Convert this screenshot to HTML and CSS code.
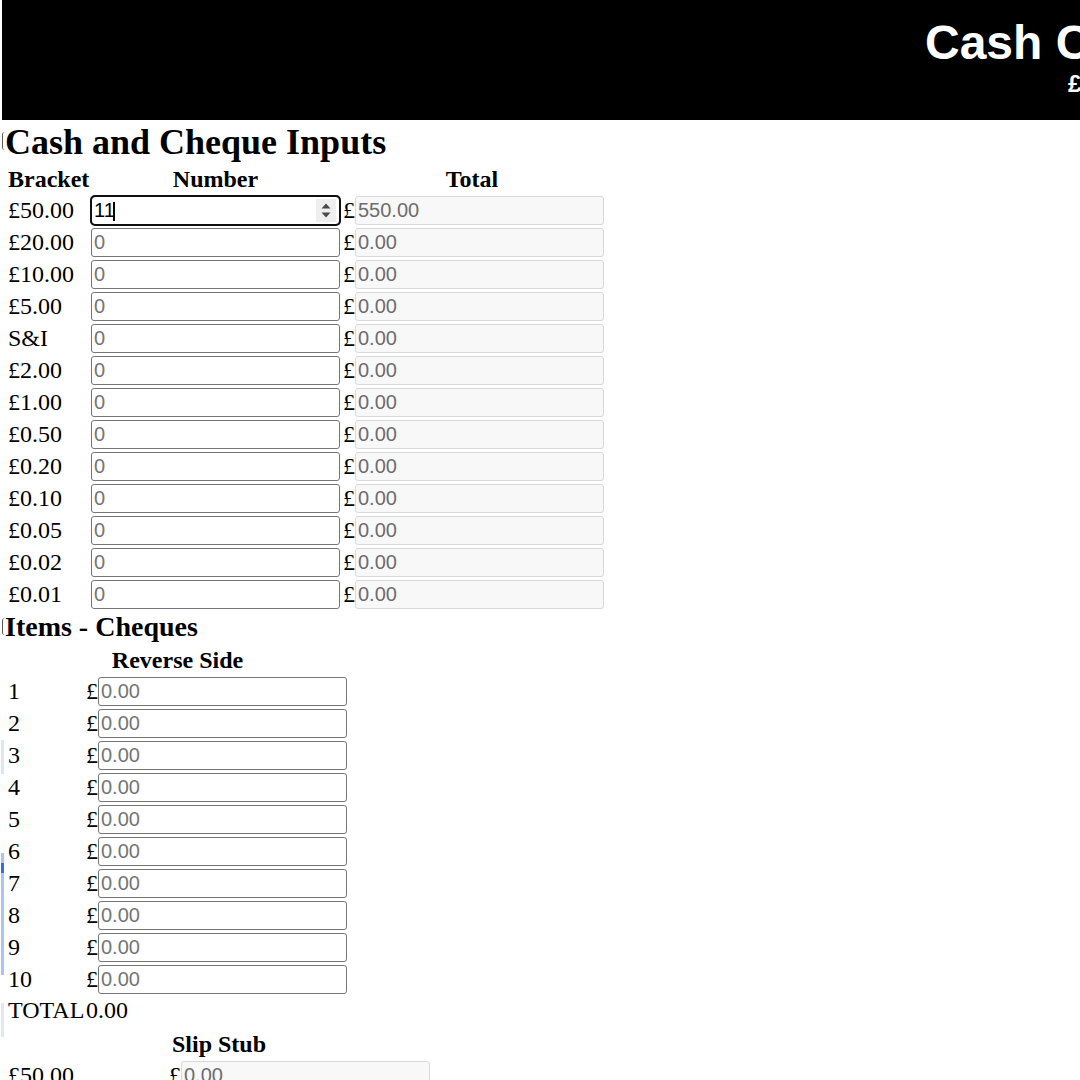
FILE: index.html
```html
<!DOCTYPE html>
<html lang="en">
<head>
<meta charset="utf-8">
<title>Cash Count</title>
<link rel="stylesheet" href="styles.css">
</head>
<body>
<header class="banner">
  <div class="banner-inner">
    <h1 class="banner-title">Cash Count</h1>
    <p class="banner-total">£550.00</p>
  </div>
</header>

<main class="page">
  <section class="block">
    <h1 class="section-title title-lg">Cash and Cheque Inputs</h1>
    <div class="grid cash-grid">
      <div class="head">Bracket</div>
      <div class="head centered">Number</div>
      <div class="head centered">Total</div>

      <div class="label">£50.00</div>
      <div class="cell">
        <span class="caret-wrap">
          <input class="field field-active" type="number" value="11">
          <span class="spin" aria-hidden="true">
            <svg width="12" height="17" viewBox="0 0 12 17"><path d="M6 1.5 L10.5 6.5 H1.5 Z" fill="#4a4a4a"/><path d="M6 15.5 L10.5 10.5 H1.5 Z" fill="#4a4a4a"/></svg>
          </span>
        </span>
      </div>
      <div class="money money-gap">£<input class="field readout" type="text" value="550.00" readonly></div>

      <div class="label">£20.00</div>
      <div class="cell"><input class="field" type="number" placeholder="0"></div>
      <div class="money money-gap">£<input class="field readout" type="text" value="0.00" readonly></div>

      <div class="label">£10.00</div>
      <div class="cell"><input class="field" type="number" placeholder="0"></div>
      <div class="money money-gap">£<input class="field readout" type="text" value="0.00" readonly></div>

      <div class="label">£5.00</div>
      <div class="cell"><input class="field" type="number" placeholder="0"></div>
      <div class="money money-gap">£<input class="field readout" type="text" value="0.00" readonly></div>

      <div class="label">S&amp;I</div>
      <div class="cell"><input class="field" type="number" placeholder="0"></div>
      <div class="money money-gap">£<input class="field readout" type="text" value="0.00" readonly></div>

      <div class="label">£2.00</div>
      <div class="cell"><input class="field" type="number" placeholder="0"></div>
      <div class="money money-gap">£<input class="field readout" type="text" value="0.00" readonly></div>

      <div class="label">£1.00</div>
      <div class="cell"><input class="field" type="number" placeholder="0"></div>
      <div class="money money-gap">£<input class="field readout" type="text" value="0.00" readonly></div>

      <div class="label">£0.50</div>
      <div class="cell"><input class="field" type="number" placeholder="0"></div>
      <div class="money money-gap">£<input class="field readout" type="text" value="0.00" readonly></div>

      <div class="label">£0.20</div>
      <div class="cell"><input class="field" type="number" placeholder="0"></div>
      <div class="money money-gap">£<input class="field readout" type="text" value="0.00" readonly></div>

      <div class="label">£0.10</div>
      <div class="cell"><input class="field" type="number" placeholder="0"></div>
      <div class="money money-gap">£<input class="field readout" type="text" value="0.00" readonly></div>

      <div class="label">£0.05</div>
      <div class="cell"><input class="field" type="number" placeholder="0"></div>
      <div class="money money-gap">£<input class="field readout" type="text" value="0.00" readonly></div>

      <div class="label">£0.02</div>
      <div class="cell"><input class="field" type="number" placeholder="0"></div>
      <div class="money money-gap">£<input class="field readout" type="text" value="0.00" readonly></div>

      <div class="label">£0.01</div>
      <div class="cell"><input class="field" type="number" placeholder="0"></div>
      <div class="money money-gap">£<input class="field readout" type="text" value="0.00" readonly></div>
    </div>
  </section>

  <section class="block">
    <h2 class="section-title title-md">Items - Cheques</h2>
    <div class="grid cheque-grid">
      <div class="head centered span-all">Reverse Side</div>

      <div class="label">1</div>
      <div class="money">£<input class="field" type="text" placeholder="0.00"></div>
      <div class="label">2</div>
      <div class="money">£<input class="field" type="text" placeholder="0.00"></div>
      <div class="label">3</div>
      <div class="money">£<input class="field" type="text" placeholder="0.00"></div>
      <div class="label">4</div>
      <div class="money">£<input class="field" type="text" placeholder="0.00"></div>
      <div class="label">5</div>
      <div class="money">£<input class="field" type="text" placeholder="0.00"></div>
      <div class="label">6</div>
      <div class="money">£<input class="field" type="text" placeholder="0.00"></div>
      <div class="label">7</div>
      <div class="money">£<input class="field" type="text" placeholder="0.00"></div>
      <div class="label">8</div>
      <div class="money">£<input class="field" type="text" placeholder="0.00"></div>
      <div class="label">9</div>
      <div class="money">£<input class="field" type="text" placeholder="0.00"></div>
      <div class="label">10</div>
      <div class="money">£<input class="field" type="text" placeholder="0.00"></div>

      <div class="label total-line">TOTAL</div>
      <div class="total-line">0.00</div>
    </div>

    <div class="grid slip-grid">
      <div class="head centered span-all">Slip Stub</div>
      <div class="label">£50.00</div>
      <div class="money">£<input class="field readout" type="text" value="0.00" readonly></div>
      <div class="label">£20.00</div>
      <div class="money">£<input class="field readout" type="text" value="0.00" readonly></div>
    </div>
  </section>
</main>

<div class="edge-marks" aria-hidden="true">
  <span class="mark mark-a"></span>
  <span class="mark mark-b"></span>
  <span class="mark mark-c"></span>
  <span class="mark mark-d"></span>
</div>
</body>
</html>
```

FILE: styles.css
```css
html, body {
  margin: 0;
  padding: 0;
  overflow: hidden;
  background: #ffffff;
}

body {
  font-family: "Liberation Serif", "Times New Roman", serif;
  color: #000000;
  position: relative;
}

/* ---------- banner ---------- */
.banner {
  margin-left: 2px;
  height: 120px;
  background: #000000;
  overflow: hidden;
  white-space: nowrap;
}

.banner-inner {
  display: flex;
  flex-direction: column;
  align-items: flex-start;
  padding-left: 923px;
  padding-top: 19px;
}

.banner-title {
  margin: 0;
  font: 700 48px/48px "Liberation Sans", Arial, sans-serif;
  color: #ffffff;
}

.banner-total {
  margin: 5px 0 0 143px;
  font: 700 24px/24px "Liberation Sans", Arial, sans-serif;
  color: #ffffff;
}

/* ---------- page ---------- */
.page {
  padding-left: 5px;
}

.section-title {
  position: relative;
  margin: 0;
  font-weight: 700;
  white-space: nowrap;
}

.section-title::before {
  content: "";
  position: absolute;
  left: -3px;
  width: 2px;
  border-left: 1.5px solid #5a5a5a;
  border-radius: 4px 0 0 4px;
}

.title-lg {
  margin-top: 4px;
  font-size: 36px;
  line-height: 36px;
}

.title-lg::before {
  top: 8px;
  height: 18px;
}

.title-md {
  margin-top: 4px;
  font-size: 28px;
  line-height: 28px;
}

.title-md::before {
  top: 5px;
  height: 17px;
}

/* ---------- grids ---------- */
.grid {
  display: grid;
  row-gap: 3px;
  padding-left: 3px;
  font-size: 24px;
  align-items: center;
  justify-content: start;
}

.cash-grid {
  margin-top: 6px;
  grid-template-columns: 83px 249px auto;
  grid-template-rows: 27px;
  grid-auto-rows: 29px;
}

.cheque-grid {
  margin-top: 6px;
  grid-template-columns: 78px auto;
  grid-template-rows: 27px;
  grid-auto-rows: 29px;
}

.slip-grid {
  margin-top: 5px;
  grid-template-columns: 161px auto;
  grid-template-rows: 27px;
  grid-auto-rows: 29px;
}

.head {
  font-weight: 700;
  line-height: 27px;
  white-space: nowrap;
}

.centered {
  text-align: center;
}

.span-all {
  grid-column: 1 / -1;
}

.label {
  line-height: 29px;
  white-space: nowrap;
}

.total-line {
  line-height: 26px;
  height: 26px;
  align-self: start;
}

.cell {
  display: flex;
  align-items: center;
}

.money {
  display: flex;
  align-items: center;
  line-height: 29px;
}

.money-gap {
  padding-left: 3px;
}

/* ---------- inputs ---------- */
.field {
  box-sizing: border-box;
  width: 249px;
  height: 29px;
  margin: 0;
  padding: 1px 2px;
  border: 1px solid #767676;
  border-radius: 3px;
  background: #ffffff;
  font: 400 20px "Liberation Sans", Arial, sans-serif;
  color: #000000;
  outline: none;
  -moz-appearance: textfield;
}

.field::placeholder {
  color: #757575;
  opacity: 1;
}

.field::-webkit-inner-spin-button,
.field::-webkit-outer-spin-button {
  -webkit-appearance: none;
  margin: 0;
}

.field-active {
  outline: 2px solid #101010;
  outline-offset: -1px;
  border-radius: 4px;
}

.readout {
  background: #f8f8f8;
  border-color: #d9d9d9;
  color: #6d6d6d;
}

.caret-wrap {
  position: relative;
  display: inline-flex;
}

.caret-wrap::after {
  content: "";
  position: absolute;
  left: 22px;
  top: 6px;
  width: 2px;
  height: 19px;
  background: #000000;
}

.spin {
  position: absolute;
  right: 4px;
  top: 3px;
  width: 20px;
  height: 23px;
  background: #efefef;
  display: flex;
  align-items: center;
  justify-content: center;
}

/* ---------- left edge artefacts ---------- */
.edge-marks {
  position: absolute;
  left: 0;
  top: 0;
  width: 5px;
  height: 1080px;
  pointer-events: none;
}

.mark {
  position: absolute;
  left: 1px;
  width: 3px;
}

.mark-a {
  top: 740px;
  height: 34px;
  background: #dfe6f3;
}

.mark-b {
  top: 853px;
  height: 122px;
  background: #aac4ef;
}

.mark-c {
  top: 863px;
  height: 10px;
  background: #2f6fd8;
}

.mark-d {
  top: 1003px;
  height: 34px;
  background: #e2e8f2;
}
```
